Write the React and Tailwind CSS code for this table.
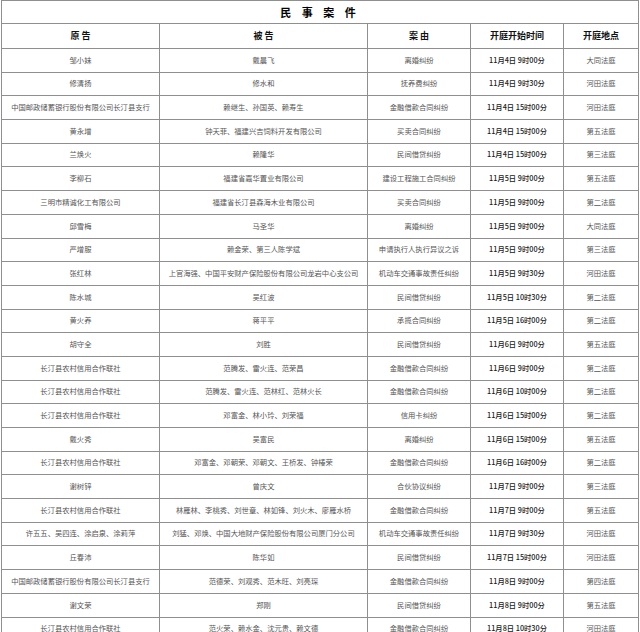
const rows = [
  ['邹小妹', '戴晨飞', '离婚纠纷', '11月4日 9时00分', '大同法庭'],
  ['修清扬', '修水和', '抚养费纠纷', '11月4日 9时30分', '河田法庭'],
  ['中国邮政储蓄银行股份有限公司长汀县支行', '赖继生、孙国英、赖寿生', '金融借款合同纠纷', '11月4日 15时00分', '河田法庭'],
  ['黄永增', '钟天菲、福建兴吉饲料开发有限公司', '买卖合同纠纷', '11月4日 15时00分', '第五法庭'],
  ['兰焕火', '赖隆华', '民间借贷纠纷', '11月4日 15时00分', '第三法庭'],
  ['李柳石', '福建省嘉华置业有限公司', '建设工程施工合同纠纷', '11月5日 9时00分', '第五法庭'],
  ['三明市精诚化工有限公司', '福建省长汀县森海木业有限公司', '买卖合同纠纷', '11月5日 9时00分', '第二法庭'],
  ['邱雪梅', '马圣华', '离婚纠纷', '11月5日 9时00分', '大同法庭'],
  ['严增服', '赖金荣、第三人陈学斌', '申请执行人执行异议之诉', '11月5日 9时00分', '第三法庭'],
  ['张红林', '上官海强、中国平安财产保险股份有限公司龙岩中心支公司', '机动车交通事故责任纠纷', '11月5日 9时30分', '河田法庭'],
  ['陈水城', '吴红波', '民间借贷纠纷', '11月5日 10时30分', '第二法庭'],
  ['黄火养', '蒋平平', '承揽合同纠纷', '11月5日 16时00分', '第二法庭'],
  ['胡守全', '刘胜', '民间借贷纠纷', '11月6日 9时00分', '第五法庭'],
  ['长汀县农村信用合作联社', '范腾发、雷火连、范荣昌', '金融借款合同纠纷', '11月6日 9时00分', '第二法庭'],
  ['长汀县农村信用合作联社', '范腾发、雷火连、范林红、范林火长', '金融借款合同纠纷', '11月6日 10时00分', '第二法庭'],
  ['长汀县农村信用合作联社', '邓富金、林小玲、刘荣福', '信用卡纠纷', '11月6日 15时00分', '第二法庭'],
  ['戴火秀', '吴富民', '离婚纠纷', '11月6日 15时00分', '第五法庭'],
  ['长汀县农村信用合作联社', '邓富金、邓朝荣、邓朝文、王桥发、钟椿荣', '金融借款合同纠纷', '11月6日 16时00分', '第二法庭'],
  ['谢树锌', '曾庆文', '合伙协议纠纷', '11月7日 9时00分', '第三法庭'],
  ['长汀县农村信用合作联社', '林雁林、李桃秀、刘世章、林如锋、刘火木、廖雁水桥', '金融借款合同纠纷', '11月7日 9时00分', '第五法庭'],
  ['许五五、吴四连、涂启泉、涂莉萍', '刘猛、邓焕、中国大地财产保险股份有限公司厦门分公司', '机动车交通事故责任纠纷', '11月7日 9时30分', '河田法庭'],
  ['丘春沛', '陈华如', '民间借贷纠纷', '11月7日 15时00分', '河田法庭'],
  ['中国邮政储蓄银行股份有限公司长汀县支行', '范德荣、刘观秀、范木旺、刘亮琛', '金融借款合同纠纷', '11月8日 9时00分', '第四法庭'],
  ['谢文荣', '郑刚', '民间借贷纠纷', '11月8日 9时00分', '第五法庭'],
  ['长汀县农村信用合作联社', '范火荣、赖水金、沈元贵、赖文德', '金融借款合同纠纷', '11月8日 10时30分', '河田法庭'],
]

const headers = ['原 告', '被 告', '案 由', '开庭开始时间', '开庭地点']

const grid = 'grid grid-cols-[158px_208px_103px_93px_75px]'

export default function App() {
  return (
    <div
      className="w-[640px] h-[632px] overflow-hidden bg-white"
      style={{ fontFamily: '"Noto Sans CJK SC", "Liberation Sans", sans-serif' }}
    >
      <div className="ml-[1px] w-[638px] border-l border-t border-[#8f8f8f]">
        <div className="flex h-[23px] items-center justify-center border-b border-r border-[#8f8f8f] text-[11px] font-bold tracking-[4px] text-black">
          民 事 案 件
        </div>
        <div className={`${grid} h-[25px]`}>
          {headers.map((h) => (
            <div
              key={h}
              className="flex items-center justify-center border-b border-r border-[#8f8f8f] text-[9px] font-bold text-[#111]"
            >
              {h}
            </div>
          ))}
        </div>
        {rows.map((row, i) => (
          <div key={i} className={`${grid} h-[23.7px]`}>
            {row.map((cell, j) => (
              <div
                key={j}
                className={`flex items-center justify-center whitespace-nowrap border-b border-r border-[#8f8f8f] text-[7.3px] leading-none ${
                  j === 3 ? 'font-medium text-[#222]' : 'text-[#555]'
                }`}
              >
                {cell}
              </div>
            ))}
          </div>
        ))}
      </div>
    </div>
  )
}
